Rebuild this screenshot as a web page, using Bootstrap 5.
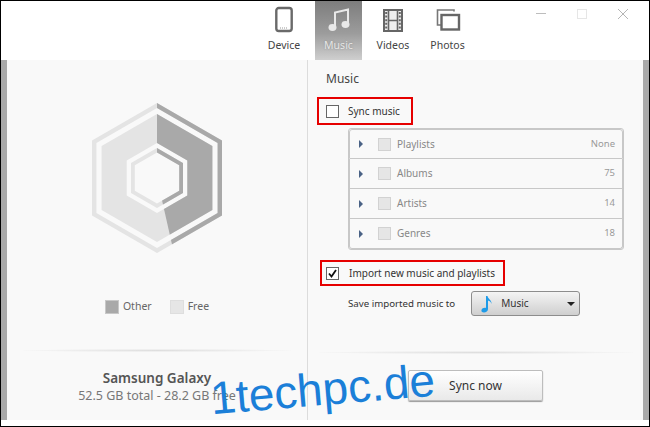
<!DOCTYPE html>
<html>
<head>
  <meta charset="UTF-8">
  <title>Music</title>
  <link href="https://cdn.jsdelivr.net/npm/bootstrap@5.3.0/dist/css/bootstrap.min.css" rel="stylesheet">
  <style>
    html, body { height: 427px; overflow: hidden; }
    body { background: #fff; font-family: "Noto Sans", "Open Sans", sans-serif; font-size: 10px; color: #333; }
    .app-frame { height: 427px; border: 1px solid #000; position: relative; background: #fff; }
    .app-head { height: 59px; padding-left: 252px; padding-right: 21px; }
    .app-tab { width: 47px; height: 59px; padding-top: 5px; color: #444; font-size: 10.5px; }
    .app-tab svg { height: 27px; margin-bottom: 5px; }
    .app-tab-wide { width: 62px; }
    .app-tab-on { background: linear-gradient(#7d7d7d, #9c9c9c 55%, #cfcfcf); color: #e6e6e6; text-shadow: 0 0 2px #888; }
    .win-btns { gap: 31px; padding-top: 8px; }
    .app-body { height: 360px; background: #f9f9f9; border-left: 6px solid #a9a9a9; border-right: 6px solid #a9a9a9; }
    .pane-left { width: 301px; padding-top: 20px; border-right: 1px solid #dcdcdc; }
    .pane-right { flex: 1; padding-left: 9px; }
    .legend-row { margin-top: 40px; gap: 18px; color: #666; height: 14px; font-size: 10.5px; }
    .swatch { width: 14px; height: 14px; border: 1px solid #c8c8c8; display: block; }
    .swatch-other { background: #a9a9a9; }
    .swatch-free { background: #e6e6e6; border-color: #dedede; }
    .soft-rule { height: 3px; background: radial-gradient(ellipse at center, #dedede, #f9f9f9 75%); }
    .left-rule { margin: 35px 16px 0; }
    .right-rule { margin: 35px 10px 0 2px; }
    .foot-name { font-size: 13.5px; font-weight: 600; color: #555; line-height: 16px; margin-top: 18px; }
    .foot-size { font-size: 12.5px; color: #777; line-height: 19px; }
    .music-title { font-size: 12px; color: #444; margin: 10px 0 0 9px; line-height: 18px; }
    .red-box { border: 2px solid #e60000; height: 28px; padding: 1px 0 0 7px; gap: 9px; white-space: nowrap; }
    .sync-box { width: 96px; margin-top: 9px; }
    .import-box { width: 185px; height: 26px; margin: 10px 0 0 3px; padding-left: 4px; gap: 10px; }
    .check-box { width: 13px; height: 13px; border: 1px solid #666; background: #fff; flex: none; display: flex; align-items: center; justify-content: center; }
    .music-list { margin: 3px 0 0 31px; width: 276px; border: 1px solid #c8c8c8; border-radius: 3px; background: transparent; }
    .music-list .list-group-item { height: 30px; background: transparent; border-color: #c8c8c8; padding: 0 7px 0 9px; color: #888; font-size: 10px; }
    .music-arrow { width: 0; height: 0; border-left: 4px solid #4a6285; border-top: 4px solid transparent; border-bottom: 4px solid transparent; margin-right: 15px; }
    .list-check { width: 13px; height: 13px; background: #e6e6e6; border: 1px solid #d2d2d2; margin-right: 6px; }
    .list-val { font-size: 9.5px; color: #999; }
    .save-row { margin: 5px 0 0 31px; gap: 16px; white-space: nowrap; }
    .save-label { font-size: 9.7px; padding-top: 1px; }
    .combo-btn { width: 109px; height: 25px; border: 1px solid #8d8d8d; border-radius: 3px; background: linear-gradient(#f4f4f4, #cfcfcf); padding: 0 4px 0 9px; font-size: 10px; color: #333; }
    .combo-caret { width: 0; height: 0; border-top: 4px solid #222; border-left: 4px solid transparent; border-right: 4px solid transparent; }
    .sync-btn { width: 135px; height: 31px; margin: 16px 0 0 91px; font-size: 12px; color: #333; border: 1px solid #bdbdbd; border-radius: 2px; background: linear-gradient(#fff, #e9e9e9); padding: 0; box-shadow: 0 1px 1px #999; }
    .water-mark { position: absolute; left: 209px; top: 358px; font-family: "Liberation Sans", Arial, sans-serif; font-size: 46px; line-height: 60px; color: #1b7fd8; transform: rotate(-4.8deg); white-space: nowrap; }
  </style>
</head>
<body>
  <div class="app-frame">
    <!-- top tabs -->
    <div class="app-head d-flex">
      <div class="app-tab app-tab-wide d-flex flex-column align-items-center">
        <svg width="20" viewBox="0 0 20 27"><rect x="2.3" y="2" width="15.4" height="23" rx="2.5" fill="none" stroke="#6a6a6a" stroke-width="2.4"/><path d="M6 22h8" stroke="#999" stroke-dasharray="1 1"/></svg>
        <span>Device</span>
      </div>
      <div class="app-tab app-tab-on d-flex flex-column align-items-center">
        <svg width="24" viewBox="0 0 24 27"><path d="M8 21V6.5L21 3.5V18" fill="none" stroke="#e8e8e8" stroke-width="2"/><ellipse cx="5.5" cy="21.5" rx="4" ry="3.4" fill="#e8e8e8"/><ellipse cx="18.5" cy="18.5" rx="4" ry="3.4" fill="#e8e8e8"/></svg>
        <span>Music</span>
      </div>
      <div class="app-tab app-tab-wide d-flex flex-column align-items-center">
        <svg width="22" viewBox="0 0 22 27"><rect x="2" y="4" width="18" height="21" fill="#eee" stroke="#666" stroke-width="2"/><path d="M6.5 4v21M15.5 4v21M6.5 14.5h9" stroke="#666" stroke-width="1.6" fill="none"/><path d="M4.2 6v18M17.8 6v18" stroke="#666" stroke-width="2" stroke-dasharray="2 1.6" fill="none"/></svg>
        <span>Videos</span>
      </div>
      <div class="app-tab d-flex flex-column align-items-center">
        <svg width="26" viewBox="0 0 26 27"><path d="M19 5.5V4H2.5v15H6" fill="none" stroke="#777" stroke-width="1.6"/><rect x="6.5" y="9" width="17.5" height="14.5" fill="none" stroke="#666" stroke-width="2.4"/></svg>
        <span>Photos</span>
      </div>
      <div class="win-btns d-flex ms-auto">
        <svg width="10" height="10" viewBox="0 0 10 10"><path d="M0 4.5h10" stroke="#bdbdbd"/></svg>
        <svg width="10" height="10" viewBox="0 0 10 10"><rect x=".5" y=".5" width="9" height="9" fill="none" stroke="#e6e6e6"/></svg>
        <svg width="10" height="10" viewBox="0 0 10 10"><path d="M0 0l10 10M10 0L0 10" stroke="#b5b5b5"/></svg>
      </div>
    </div>

    <div class="app-body d-flex">
      <!-- storage side -->
      <div class="pane-left d-flex flex-column">
        <svg class="align-self-center" width="180" height="180" viewBox="-2.7 0 180 180">
          <defs><clipPath id="usedPart"><polygon points="87.3,98 87.3,0 180,0 180,180 105.8,180"/></clipPath></defs>
          <g fill="#e4e4e4" fill-rule="evenodd">
            <path d="M87.3 23L152.3 60.5V135.5L87.3 173L22.3 135.5V60.5ZM87.3 28L26.7 63V133L87.3 168L147.9 133V63Z"/>
            <path d="M87.3 34L142.7 66V130L87.3 162L31.9 130V66ZM87.3 63L57 80.5V115.5L87.3 133L117.6 115.5V80.5Z"/>
            <path d="M87.3 68L113.3 83V113L87.3 128L61.3 113V83ZM87.3 72.4L65.1 85.2V110.8L87.3 123.6L109.5 110.8V85.2Z"/>
          </g>
          <g clip-path="url(#usedPart)" fill="#a9a9a9" fill-rule="evenodd">
            <path d="M87.3 23L152.3 60.5V135.5L87.3 173L22.3 135.5V60.5ZM87.3 28L26.7 63V133L87.3 168L147.9 133V63Z"/>
            <path d="M87.3 34L142.7 66V130L87.3 162L31.9 130V66ZM87.3 63L57 80.5V115.5L87.3 133L117.6 115.5V80.5Z"/>
            <path d="M87.3 68L113.3 83V113L87.3 128L61.3 113V83ZM87.3 72.4L65.1 85.2V110.8L87.3 123.6L109.5 110.8V85.2Z"/>
          </g>
        </svg>
        <div class="legend-row d-flex justify-content-center align-items-center">
          <div class="d-flex align-items-center gap-1"><span class="swatch swatch-other"></span><span>Other</span></div>
          <div class="d-flex align-items-center gap-1"><span class="swatch swatch-free"></span><span>Free</span></div>
        </div>
        <div class="soft-rule left-rule"></div>
        <div class="text-center">
          <div class="foot-name">Samsung Galaxy</div>
          <div class="foot-size">52.5 GB total - 28.2 GB free</div>
        </div>
      </div>

      <!-- music options -->
      <div class="pane-right d-flex flex-column align-items-start">
        <div class="music-title">Music</div>
        <div class="red-box sync-box d-flex align-items-center">
          <span class="check-box"></span><span>Sync music</span>
        </div>
        <div class="music-list list-group">
          <div class="list-group-item d-flex align-items-center"><span class="music-arrow"></span><span class="list-check"></span><span>Playlists</span><span class="list-val ms-auto">None</span></div>
          <div class="list-group-item d-flex align-items-center"><span class="music-arrow"></span><span class="list-check"></span><span>Albums</span><span class="list-val ms-auto">75</span></div>
          <div class="list-group-item d-flex align-items-center"><span class="music-arrow"></span><span class="list-check"></span><span>Artists</span><span class="list-val ms-auto">14</span></div>
          <div class="list-group-item d-flex align-items-center"><span class="music-arrow"></span><span class="list-check"></span><span>Genres</span><span class="list-val ms-auto">18</span></div>
        </div>
        <div class="red-box import-box d-flex align-items-center">
          <span class="check-box"><svg width="9" height="9" viewBox="0 0 9 9"><path d="M1 4.5L3.5 7.5L8 1" fill="none" stroke="#111" stroke-width="1.8"/></svg></span><span>Import new music and playlists</span>
        </div>
        <div class="save-row d-flex align-items-center">
          <span class="save-label">Save imported music to</span>
          <div class="combo-btn d-flex align-items-center">
            <svg width="12" height="18" viewBox="0 0 12 18" class="me-2"><path d="M5 1h1.5c.4 3 4.5 4 4 8-.3-2-2-3.2-3.500-3.500V14c0 2-2 3.500-4 3.500S0 16.500 .5 15 3 12.500 5 13Z" fill="#1e9be8"/></svg>
            <span>Music</span>
            <span class="combo-caret ms-auto"></span>
          </div>
        </div>
        <div class="soft-rule right-rule align-self-stretch"></div>
        <button class="btn sync-btn" type="button">Sync now</button>
      </div>
    </div>

    <div class="water-mark">1techpc.de</div>
  </div>
  <script src="https://cdn.jsdelivr.net/npm/bootstrap@5.3.0/dist/js/bootstrap.bundle.min.js"></script>
</body>
</html>
